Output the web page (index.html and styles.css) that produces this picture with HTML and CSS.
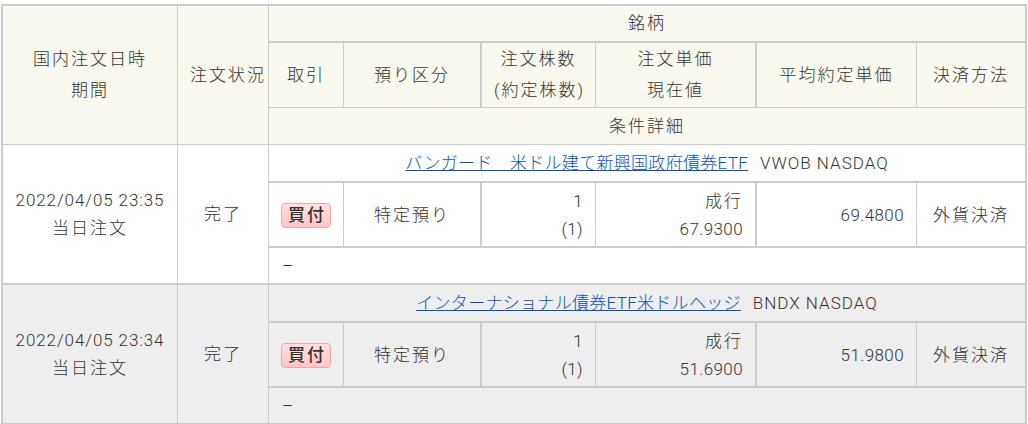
FILE: index.html
```html
<!DOCTYPE html>
<html lang="ja">
<head>
<meta charset="utf-8">
<title>注文一覧</title>
<link rel="stylesheet" href="styles.css">
</head>
<body>
<table class="orders">
  <colgroup>
    <col class="w-date"><col class="w-status"><col class="w-trade"><col class="w-acct"><col class="w-qty"><col class="w-price"><col class="w-avg"><col class="w-settle">
  </colgroup>
  <thead>
    <tr class="row-name">
      <th class="side cjk" rowspan="3">国内注文日時<br>期間</th>
      <th class="side cjk" rowspan="3">注文状況</th>
      <th class="cjk end thick-b" colspan="6">銘柄</th>
    </tr>
    <tr class="row-main">
      <th class="cjk">取引</th>
      <th class="cjk thick-r">預り区分</th>
      <th class="cjk">注文株数<br>(約定株数)</th>
      <th class="cjk thick-r">注文単価<br>現在値</th>
      <th class="cjk">平均約定単価</th>
      <th class="cjk end">決済方法</th>
    </tr>
    <tr class="row-detail">
      <th class="cjk end" colspan="6">条件詳細</th>
    </tr>
  </thead>
  <tbody class="order">
    <tr class="row-name">
      <td class="side thick-b" rowspan="3"><span class="date">2022/04/05 23:35</span><br><span class="cjk">当日注文</span></td>
      <td class="side cjk thick-b" rowspan="3">完了</td>
      <td class="end thick-b" colspan="6"><a class="fund" href="#">バンガード　米ドル建て新興国政府債券ETF</a><span class="ticker">VWOB NASDAQ</span></td>
    </tr>
    <tr class="row-main">
      <td class="thick-b"><span class="badge">買付</span></td>
      <td class="cjk thick-r thick-b">特定預り</td>
      <td class="num thick-b">1<br>(1)</td>
      <td class="num thick-r thick-b"><span class="cjk">成行</span><br>67.9300</td>
      <td class="num thick-b">69.4800</td>
      <td class="cjk end thick-b">外貨決済</td>
    </tr>
    <tr class="row-detail">
      <td class="detail end thick-b" colspan="6">–</td>
    </tr>
  </tbody>
  <tbody class="order alt">
    <tr class="row-name">
      <td class="side thick-b" rowspan="3"><span class="date">2022/04/05 23:34</span><br><span class="cjk">当日注文</span></td>
      <td class="side cjk thick-b" rowspan="3">完了</td>
      <td class="end thick-b" colspan="6"><a class="fund" href="#">インターナショナル債券ETF米ドルヘッジ</a><span class="ticker">BNDX NASDAQ</span></td>
    </tr>
    <tr class="row-main">
      <td class="thick-b"><span class="badge">買付</span></td>
      <td class="cjk thick-r thick-b">特定預り</td>
      <td class="num thick-b">1<br>(1)</td>
      <td class="num thick-r thick-b"><span class="cjk">成行</span><br>51.6900</td>
      <td class="num thick-b">51.9800</td>
      <td class="cjk end thick-b">外貨決済</td>
    </tr>
    <tr class="row-detail">
      <td class="detail end thick-b" colspan="6">–</td>
    </tr>
  </tbody>
</table>
</body>
</html>
```

FILE: styles.css
```css
body {
  margin: 4px 0 0 1px;
  font-family: "Roboto", "Noto Sans CJK JP", sans-serif;
  font-size: 17px;
  font-weight: 300;
  color: #333;
  background: #fff;
}

.orders {
  border-collapse: separate;
  border-spacing: 0;
  table-layout: fixed;
  width: 1026px;
  border-top: 2px solid #ccc;
  border-left: 2px solid #ccc;
}

.w-date { width: 175px; }
.w-status { width: 91px; }
.w-trade { width: 75px; }
.w-acct { width: 138px; }
.w-qty { width: 114px; }
.w-price { width: 161px; }
.w-avg { width: 160px; }
.w-settle { width: 110px; }

th, td {
  box-sizing: border-box;
  padding: 0 12px;
  border-right: 1px solid #ccc;
  border-bottom: 1px solid #ccc;
  font-weight: 300;
  text-align: center;
  vertical-align: middle;
  white-space: nowrap;
}

thead th {
  background: #f8f8ee;
  line-height: 31px;
}

tbody td {
  background: #fff;
  line-height: 28px;
}

tbody.alt td {
  background: #eee;
}

.thick-r { border-right-width: 2px; }
.thick-b { border-bottom-width: 2px; }
.end { border-right-width: 2px; }

thead .row-name th { height: 37px; }
thead .row-main th { height: 65px; }
thead .row-detail th { height: 37px; }

tbody .row-name td { height: 38px; }
tbody .row-main td { height: 65px; }
tbody .row-detail td { height: 37px; }

.cjk { letter-spacing: 2px; }

.date { letter-spacing: 0.9px; }

.num {
  text-align: right;
  letter-spacing: 0.4px;
}

.num .cjk { letter-spacing: 2px; }

.fund {
  color: #0a52b5;
  text-decoration: underline;
  letter-spacing: 0.3px;
}

.ticker {
  margin-left: 12px;
  letter-spacing: 1px;
}

.badge {
  display: inline-block;
  padding: 0 4px 0 6px;
  line-height: 23px;
  border: 1px solid #f3a8a8;
  border-radius: 4px;
  background: linear-gradient(#ffe0e0, #ffc6c6);
  color: #333;
  font-weight: 500;
  letter-spacing: 2px;
  font-size: 17px;
}

.detail {
  text-align: left;
  padding-left: 13px;
}
```
